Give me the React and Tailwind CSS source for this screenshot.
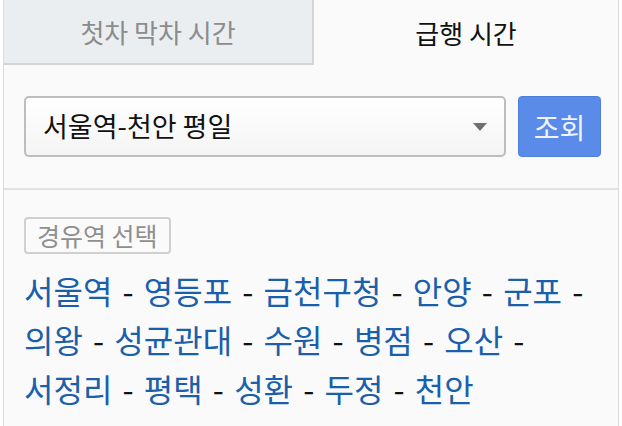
import React from "react";

const stations = ["서울역","영등포","금천구청","안양","군포","의왕","성균관대","수원","병점","오산","서정리","평택","성환","두정","천안"];

export default function App() {
  return (
    <div className="w-[622px] h-[426px] bg-white overflow-hidden" style={{ fontFamily: '"Noto Sans CJK KR", "Noto Sans", sans-serif' }}>
      <div className="ml-[3px] w-[616px] h-full border-l border-r border-[#dcdcdc] bg-[#fafafa] flex flex-col">
        <div className="flex h-[65px]">
          <div className="w-[310px] bg-[#ebeef0] border-b-2 border-r-2 border-[#d2d5d8] flex items-center justify-center text-[26px] text-[#8a8c8e]">
            첫차 막차 시간
          </div>
          <div className="flex-1 flex items-center justify-center text-[26px] text-[#111]">
            급행 시간
          </div>
        </div>
        <div className="flex gap-[12px] pl-[20px] pr-[17px] pt-[31px] pb-[31px]">
          <div className="flex-1 h-[61px] rounded-[5px] border-2 border-[#bdbdbd] bg-gradient-to-b from-white to-[#f4f4f4] flex items-center pl-[17px] pr-[17px]">
            <span className="flex-1 text-[27px] text-[#111]">서울역-천안 평일</span>
            <svg width="14" height="8" viewBox="0 0 14 8"><path d="M0 0 L14 0 L7 8 Z" fill="#6e6e74" /></svg>
          </div>
          <div className="w-[83px] h-[61px] rounded-[4px] bg-[#5a8be8] border border-[#4d7fdc] flex items-center justify-center text-[28px] text-[#f0f4ff]">
            조회
          </div>
        </div>
        <div className="border-t-2 border-[#e2e2e2] pl-[20px] pr-[17px] pt-[27px]">
          <div className="inline-flex items-center h-[37px] px-[11px] border-2 border-[#d0d0d0] rounded-[4px] text-[25px] text-[#8f8f8f]">
            경유역 선택
          </div>
          <div className="mt-[12px] text-[32px] leading-[49px] text-[#111] break-keep [word-spacing:3px]">
            {stations.map((s, i) => (
              <React.Fragment key={s}>
                <span className="text-[#1a5fab]">{s}</span>
                {i < stations.length - 1 && " - "}
              </React.Fragment>
            ))}
          </div>
        </div>
      </div>
    </div>
  );
}
